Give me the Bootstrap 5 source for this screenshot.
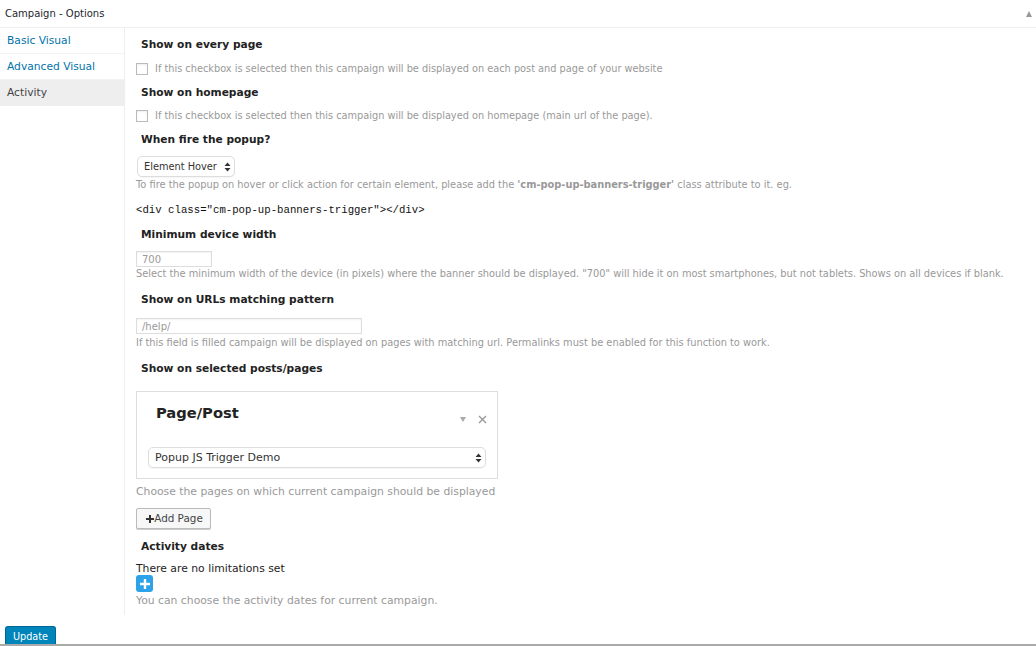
<!DOCTYPE html>
<html lang="en"><head><meta charset="utf-8"><title>Campaign - Options</title>
<link href="https://cdn.jsdelivr.net/npm/bootstrap@5.3.0/dist/css/bootstrap.min.css" rel="stylesheet">
<style>
html,body{height:646px;overflow:hidden;background:#fff}
body{font-family:"DejaVu Sans",Verdana,sans-serif;font-size:9.77px;color:#222;line-height:14px}
.topbar{height:28px;border-bottom:1px solid #eee;padding:0 5px;align-items:center;justify-content:space-between}
.topbar-title{font-size:10px;color:#23282d}
.caret-up{width:0;height:0;border-left:3.5px solid transparent;border-right:3.5px solid transparent;border-bottom:6px solid #999;margin-right:-1px}
.body-wrap{height:587px}
.side{width:125px;flex:none;border-right:1px solid #eee;background:#fff}
.side a{display:block;height:26px;padding:6px 7px;font-size:10.7px;line-height:14px;color:#0073aa;text-decoration:none;border-bottom:1px solid #f3f3f3}
.side a.on{background:#eee;color:#444;border-bottom:0}
.main{padding:0 11px;flex:1;min-width:0}
.opt-head{font-weight:700;font-size:10.65px;line-height:15px;color:#222;padding-left:5px;margin:0}
.opt-note{color:#999;font-size:9.83px;line-height:14px;margin:0}
.opt-note.wide{font-size:10.8px}
.chk{width:12px;height:12px;border:1px solid #bbb;background:#fff;flex:none;box-shadow:inset 0 1px 2px rgba(0,0,0,.07)}
.chk-row{gap:7px;align-items:center;color:#999}
.sel{appearance:none;background:#fff url("data:image/svg+xml,%3Csvg xmlns='http://www.w3.org/2000/svg' width='7' height='10'%3E%3Cpath d='M3.5 0.5L6.5 4H.5zM3.5 9.5L.5 6H6.5z' fill='%23333'/%3E%3C/svg%3E") no-repeat right 3px center;border:1px solid #ddd;border-radius:5px;color:#333;font:11px/14px "DejaVu Sans",Verdana,sans-serif;padding:0 0 0 6px;box-shadow:0 1px 1px rgba(0,0,0,.04)}
.sel-a{width:98px;height:21px;margin-left:1px;font-size:9.8px}
.sel-b{width:338px;height:21px}
.inp{border:1px solid #ddd;background:#fff;color:#999;font:10px/14px "DejaVu Sans",Verdana,sans-serif;padding:0 5px;height:16px;display:block;box-shadow:inset 0 1px 2px rgba(0,0,0,.05)}
.inp-a{width:76px}.inp-b{width:226px}
.inp::placeholder{color:#999;opacity:1}
.code-line{font-family:"Liberation Mono",monospace;font-size:10.7px;color:#111;line-height:14px}
.pbox{width:362px;height:88px;border:1px solid #ddd;padding:0 11px;position:relative}
.pbox-title{font-size:14.7px;font-weight:700;line-height:18px;color:#222;padding:12px 0 0 8px;height:55px;margin:0}
.pbox-tools{position:absolute;right:10px;top:23px;gap:12px;align-items:center;color:#999}
.mini-down{width:0;height:0;border-left:3px solid transparent;border-right:3px solid transparent;border-top:5px solid #aaa}
.add-btn{width:75px;height:21px;padding:0 0 0 2px;border:1px solid #bbb;border-radius:2px;background:#f7f7f7;color:#444;font-size:10.4px;line-height:19px;box-shadow:0 1px 0 #ccc;display:flex;align-items:center;justify-content:center}
.plus-btn{width:17px;height:17px;background:#2ea2e8;border-radius:3px;display:flex;align-items:center;justify-content:center;border:0;padding:0}
.limits{font-size:10.8px;line-height:13px;color:#222}
.upd-btn{width:51px;height:18px;background:#0085ba;color:#fff;border:1px solid #006799;border-bottom:0;border-radius:3px 3px 0 0;font-size:9.7px;line-height:14px;padding:2px 0 0;margin-left:5px;display:block}
.foot{height:31px;border-bottom:2px solid #aaa;display:flex;align-items:flex-end}
.mt-a{margin-top:10px}.mt-b{margin-top:9px}.mt-c{margin-top:8px}.mt-d{margin-top:2px}.mt-e{margin-top:11px}.mt-f{margin-top:15px}.mt-g{margin-top:6px}.mt-h{margin-top:0}.mt-i{margin-top:1px}
</style></head><body>
<div class="d-flex topbar"><span class="topbar-title">Campaign - Options</span><span class="caret-up"></span></div>
<div class="d-flex body-wrap">
 <nav class="side"><a href="#">Basic Visual</a><a href="#">Advanced Visual</a><a href="#" class="on">Activity</a></nav>
 <div class="main">
  <h6 class="opt-head mt-b">Show on every page</h6>
  <div class="d-flex chk-row mt-a"><span class="chk"></span><span>If this checkbox is selected then this campaign will be displayed on each post and page of your website</span></div>
  <h6 class="opt-head mt-b">Show on homepage</h6>
  <div class="d-flex chk-row mt-b"><span class="chk"></span><span>If this checkbox is selected then this campaign will be displayed on homepage (main url of the page).</span></div>
  <h6 class="opt-head mt-b">When fire the popup?</h6>
  <select class="sel sel-a d-block mt-b"><option>Element Hover</option></select>
  <p class="opt-note mt-i">To fire the popup on hover or click action for certain element, please add the <b>'cm-pop-up-banners-trigger'</b> class attribute to it. eg.</p>
  <div class="code-line mt-e">&lt;div class="cm-pop-up-banners-trigger"&gt;&lt;/div&gt;</div>
  <h6 class="opt-head mt-a">Minimum device width</h6>
  <input class="inp inp-a mt-b" placeholder="700">
  <p class="opt-note mt-h">Select the minimum width of the device (in pixels) where the banner should be displayed. "700" will hide it on most smartphones, but not tablets. Shows on all devices if blank.</p>
  <h6 class="opt-head mt-e">Show on URLs matching pattern</h6>
  <input class="inp inp-b mt-e" placeholder="/help/">
  <p class="opt-note mt-d">If this field is filled campaign will be displayed on pages with matching url. Permalinks must be enabled for this function to work.</p>
  <h6 class="opt-head mt-e">Show on selected posts/pages</h6>
  <div class="pbox mt-f">
    <h5 class="pbox-title">Page/Post</h5>
    <div class="d-flex pbox-tools"><span class="mini-down"></span><svg width="9" height="9" viewBox="0 0 9 9"><path d="M1 1L8 8M8 1L1 8" stroke="#999" stroke-width="1.4"/></svg></div>
    <select class="sel sel-b d-block"><option>Popup JS Trigger Demo</option></select>
  </div>
  <p class="opt-note wide mt-g">Choose the pages on which current campaign should be displayed</p>
  <button class="add-btn mt-b" type="button"><svg width="8" height="8" viewBox="0 0 8 8"><path d="M4 0V8M0 4H8" stroke="#333" stroke-width="2"/></svg>Add Page</button>
  <h6 class="opt-head mt-a">Activity dates</h6>
  <div class="limits mt-c">There are no limitations set</div>
  <button class="plus-btn" type="button" aria-label="Add"><svg width="10" height="10" viewBox="0 0 10 10"><path d="M5 0V10M0 5H10" stroke="#fff" stroke-width="2.4"/></svg></button>
  <p class="opt-note wide mt-d">You can choose the activity dates for current campaign.</p>
 </div>
</div>
<div class="foot"><button class="upd-btn" type="button">Update</button></div>
</body></html>
